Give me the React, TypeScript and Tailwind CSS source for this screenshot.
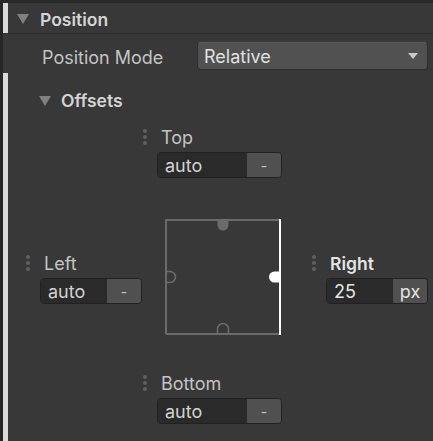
import React from 'react';

const Dots: React.FC = () => (
  <div className="w-[12px] flex flex-col items-center gap-[2px]">
    <div className="w-[4px] h-[4px] rounded-full bg-[#606060]" />
    <div className="w-[4px] h-[4px] rounded-full bg-[#606060]" />
    <div className="w-[4px] h-[4px] rounded-full bg-[#606060]" />
  </div>
);

interface FieldProps {
  value: string;
  unit: string;
  set?: boolean;
}

const Field: React.FC<FieldProps> = ({ value, unit, set }) => (
  <div className="flex h-[26px] rounded-[4px] border border-[#212121] overflow-hidden">
    <div
      className={`flex-1 bg-[#2a2a2a] pl-[7px] pt-[2px] flex items-center ${set ? 'text-[#e4e4e4]' : 'text-[#d2d2d2]'}`}
    >
      {value}
    </div>
    <div
      className={`w-[34px] bg-[#505050] pt-[2px] flex items-center justify-center ${set ? 'text-[#e4e4e4]' : 'text-[#c4c4c4] text-[14px]'}`}
    >
      {unit}
    </div>
  </div>
);

interface GroupProps {
  label: string;
  value: string;
  unit: string;
  fieldWidth: string;
  set?: boolean;
  className?: string;
}

const OffsetGroup: React.FC<GroupProps> = ({ label, value, unit, fieldWidth, set, className }) => (
  <div className={`flex flex-col ${className ?? ''}`}>
    <div className="flex items-center h-[20px]">
      <Dots />
      <span
        className={`ml-[10px] pt-[2px] ${set ? 'font-semibold text-[#e4e4e4] text-[17.5px]' : 'text-[#c4c4c4]'}`}
      >
        {label}
      </span>
    </div>
    <div className={`mt-[5px] ml-[18px] ${fieldWidth}`}>
      <Field value={value} unit={unit} set={set} />
    </div>
  </div>
);

const OffsetBox: React.FC = () => (
  <svg width="116" height="116" viewBox="0 0 116 116" className="shrink-0">
    <path d="M1 115 V1 H114" fill="none" stroke="#6b6b6b" strokeWidth="2" />
    <path d="M1 115 H114" fill="none" stroke="#6b6b6b" strokeWidth="2" />
    <path d="M115 0 V116" fill="none" stroke="#ffffff" strokeWidth="2" />
    {/* top notch - filled */}
    <path d="M52.5 2 V6 A5.5 5.5 0 0 0 63.5 6 V2 Z" fill="#6b6b6b" />
    {/* left notch - outline */}
    <path d="M2 52.5 H5 A5.5 5.5 0 0 1 5 63.5 H2" fill="none" stroke="#6b6b6b" strokeWidth="1.5" />
    {/* right notch - filled white */}
    <path d="M114 52.5 H109.5 A5.5 5.5 0 0 0 109.5 63.5 H114 Z" fill="#ffffff" />
    {/* bottom notch - outline */}
    <path d="M52.5 114 V110 A5.5 5.5 0 0 1 63.5 110 V114" fill="none" stroke="#6b6b6b" strokeWidth="1.5" />
  </svg>
);

export default function App() {
  return (
    <div className="w-[433px] h-[441px] bg-[#383838] font-['Inter','Noto_Sans',sans-serif] text-[18px] leading-none flex flex-col overflow-hidden">
      <div className="h-[3px] bg-[#282828] shrink-0" />
      <div className="flex flex-1">
        <div className="w-[3px] bg-[#262626] shrink-0" />
        <div className="flex-1 flex flex-col">
          {/* Position header */}
          <div className="h-[31px] flex items-center border-b border-[#2b2b2b] shrink-0">
            <div className="w-[5px] self-stretch bg-[#dadada]" />
            <svg width="12" height="10" viewBox="0 0 12 10" className="ml-[9px] mt-[1px]">
              <path d="M0 0 H12 L6 10 Z" fill="#808080" />
            </svg>
            <span className="ml-[11px] pt-[3px] font-semibold text-[#d4d4d4] text-[17.5px]">Position</span>
          </div>

          {/* Position Mode */}
          <div className="h-[39px] flex items-start pt-[8px] shrink-0">
            <span className="ml-[39px] mt-[7px] w-[155px] text-[#c4c4c4]">Position Mode</span>
            <div className="w-[231px] h-[28px] rounded-[4px] bg-[#515151] border border-[#2f2f2f] border-t-[#5a5a5a] flex items-center px-[6px] justify-between">
              <span className="text-[#e0e0e0] pt-[2px]">Relative</span>
              <svg width="10" height="6" viewBox="0 0 10 6" className="mr-[3px]">
                <path d="M0 0 H10 L5 6 Z" fill="#c8c8c8" />
              </svg>
            </div>
          </div>

          {/* Offsets section */}
          <div className="flex flex-1">
            <div className="w-[5px] bg-[#dadada] shrink-0" />
            <div className="flex-1 flex flex-col">
              <div className="h-[24px] mt-[15px] flex items-center">
                <svg width="12" height="10" viewBox="0 0 12 10" className="ml-[31px] mt-[1px]">
                  <path d="M0 0 H12 L6 10 Z" fill="#808080" />
                </svg>
                <span className="ml-[10px] pt-[2px] font-semibold text-[#d4d4d4] text-[17.5px]">Offsets</span>
              </div>

              <OffsetGroup
                label="Top"
                value="auto"
                unit="-"
                fieldWidth="w-[125px]"
                className="mt-[15px] ml-[131px]"
              />

              <div className="flex items-start mt-[41px]">
                <OffsetGroup
                  label="Left"
                  value="auto"
                  unit="-"
                  fieldWidth="w-[102px]"
                  className="ml-[14px] mt-[34px]"
                />
                <div className="ml-[23px]">
                  <OffsetBox />
                </div>
                <OffsetGroup
                  label="Right"
                  value="25"
                  unit="px"
                  fieldWidth="w-[102px]"
                  set
                  className="ml-[27px] mt-[34px]"
                />
              </div>

              <OffsetGroup
                label="Bottom"
                value="auto"
                unit="-"
                fieldWidth="w-[125px]"
                className="mt-[38px] ml-[131px]"
              />
            </div>
          </div>
        </div>
      </div>
    </div>
  );
}
